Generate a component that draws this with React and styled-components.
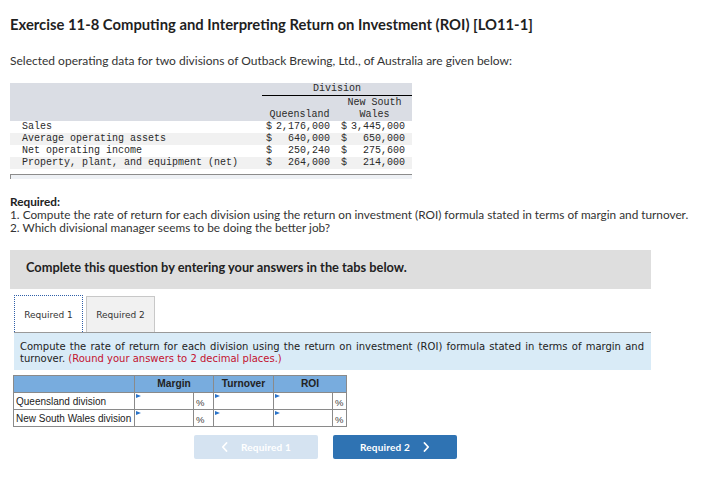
import React from 'react';
import styled, { createGlobalStyle } from 'styled-components';

const Global = createGlobalStyle`
  html, body { margin: 0; padding: 0; background: #fff; }
  body { font-family: Lato, "Open Sans", sans-serif; color: #333; }
`;

const Page = styled.div`
  width: 722px;
  box-sizing: border-box;
  padding: 15px 10px 0;
`;

const Title = styled.h1`
  margin: 0;
  font: 700 14.8px/18px Lato, sans-serif;
  color: #1f1f1f;
`;

const Intro = styled.p`
  margin: 21px 0 0;
  font: 400 12px/14px Lato, sans-serif;
  color: #333;
`;

const DataTable = styled.table`
  margin-top: 15px;
  width: 402px;
  border-collapse: collapse;
  table-layout: fixed;
  font: 400 10px/12px "Liberation Mono", monospace;
  color: #2a2a2a;
  td { padding: 0; height: 12px; white-space: pre; }
`;

const HeadRow = styled.tr`
  background: #dadde4;
  ${p => p.$tall && 'td { height: 13px; }'}
`;

const HeadCell = styled.td`
  text-align: center;
  ${p => p.$rule && 'border-bottom: 1px solid #000;'}
`;

const BodyRow = styled.tr`
  background: ${p => (p.$alt ? '#f1f1f1' : '#fff')};
`;

const LabelCell = styled.td`
  padding-left: 12px !important;
`;

const ValueCell = styled.td`
  padding: 0 7px 0 4px !important;
`;

const Money = styled.span`
  display: flex;
  justify-content: space-between;
`;

const TableFoot = styled.div`
  margin-top: 5px;
  width: 401px;
  height: 4px;
  border-top: 1px solid #8c8c8c;
  border-left: 1px solid #8c8c8c;
  background: #eef1f5;
`;

const Required = styled.div`
  margin-top: 16px;
  font: 400 11.8px/13px Lato, sans-serif;
  color: #333;
  b { font-weight: 700; color: #222; }
`;

const InstructionBar = styled.div`
  margin-top: 16px;
  width: 641px;
  height: 39px;
  box-sizing: border-box;
  padding: 10px 16px 0;
  background: #dedede;
  font: 700 12.8px/14px Lato, sans-serif;
  color: #222;
`;

const TabStrip = styled.div`
  display: flex;
  align-items: flex-end;
  gap: 3px;
  margin: 6px 0 0 4px;
`;

const Tab = styled.div`
  width: 69px;
  box-sizing: border-box;
  height: ${p => (p.$active ? '37px' : '36px')};
  padding-top: 1px;
  display: flex;
  align-items: center;
  justify-content: center;
  font: 400 9px/12px "DejaVu Sans", Verdana, sans-serif;
  color: #333;
  background: ${p => (p.$active ? '#fff' : '#f1f1f1')};
  border: ${p => (p.$active ? '1px dotted #2f5fa8' : '1px solid #c8c8c8')};
  border-bottom: none;
`;

const Panel = styled.div`
  margin-left: 4px;
  width: 637px;
  height: 38px;
  box-sizing: border-box;
  padding: 8px 7px 0 6px;
  background: #d9ebf7;
  border-top: 1px solid #999;
  font: 400 10px/12px "DejaVu Sans", Verdana, sans-serif;
  text-align: justify;
  color: #222;
`;

const Hint = styled.span`
  color: #c4122f;
`;

const AnswerTable = styled.table`
  margin: 5px 0 0 3px;
  border-collapse: collapse;
  table-layout: fixed;
  font: 400 10px/12px "Liberation Sans", Arial, sans-serif;
  color: #222;
  border: 1px solid #777;
  td, th { border: 1px solid #8a8a8a; padding: 0; }
`;

const AHead = styled.tr`
  background: #78acde;
  th { height: 16px; font-weight: 700; font-size: 10.2px; text-align: center; color: #222; }
`;

const ARow = styled.tr`
  td { height: 15px; }
`;

const RowLabel = styled.td`
  padding: 1px 0 0 2px !important;
  white-space: nowrap;
`;

const InputCell = styled.td`
  position: relative;
  background: #fff;
  &::before {
    content: '';
    position: absolute;
    left: 1px;
    top: 1px;
    border-top: 2.5px solid transparent;
    border-bottom: 2.5px solid transparent;
    border-left: 5px solid #2a73c9;
  }
`;

const Pct = styled.td`
  padding-left: 2px !important;
  vertical-align: bottom;
  font-size: 9.5px;
  color: #444;
  line-height: 13px;
`;

const NavRow = styled.div`
  display: flex;
  gap: 15px;
  margin: 8px 0 0 184px;
`;

const NavButton = styled.button`
  width: 124px;
  height: 24px;
  border: none;
  border-radius: 2px;
  display: flex;
  align-items: center;
  justify-content: center;
  gap: 13px;
  font: 700 10px/12px Lato, sans-serif;
  letter-spacing: 0.2px;
  color: #fff;
  background: ${p => (p.$disabled ? '#d5e3f1' : '#2f73b3')};
  cursor: ${p => (p.$disabled ? 'default' : 'pointer')};
  padding: 0;
`;

const Chevron = ({ dir }) => (
  <svg width="7" height="10" viewBox="0 0 7 10" fill="none">
    <path
      d={dir === 'left' ? 'M5.5 1 L1.8 5 L5.5 9' : 'M1.5 1 L5.2 5 L1.5 9'}
      stroke="#fff"
      strokeWidth="1.8"
      strokeLinecap="round"
      strokeLinejoin="round"
    />
  </svg>
);

const rows = [
  { label: 'Sales', q: ['$', '2,176,000'], n: ['$', '3,445,000'] },
  { label: 'Average operating assets', q: ['$', '640,000'], n: ['$', '650,000'] },
  { label: 'Net operating income', q: ['$', '250,240'], n: ['$', '275,600'] },
  { label: 'Property, plant, and equipment (net)', q: ['$', '264,000'], n: ['$', '214,000'] },
];

export default function App() {
  return (
    <>
      <Global />
      <Page>
        <Title>Exercise 11-8 Computing and Interpreting Return on Investment (ROI) [LO11-1]</Title>
        <Intro>Selected operating data for two divisions of Outback Brewing, Ltd., of Australia are given below:</Intro>

        <DataTable>
          <colgroup>
            <col style={{ width: 252 }} />
            <col style={{ width: 75 }} />
            <col style={{ width: 75 }} />
          </colgroup>
          <tbody>
            <HeadRow>
              <td rowSpan={3} />
              <HeadCell colSpan={2} $rule>Division</HeadCell>
            </HeadRow>
            <HeadRow $tall>
              <HeadCell />
              <HeadCell>New South</HeadCell>
            </HeadRow>
            <HeadRow>
              <HeadCell>Queensland</HeadCell>
              <HeadCell>Wales</HeadCell>
            </HeadRow>
            {rows.map((r, i) => (
              <BodyRow key={r.label} $alt={i % 2 === 1}>
                <LabelCell>{r.label}</LabelCell>
                <ValueCell>
                  <Money><span>{r.q[0]}</span><span>{r.q[1]}</span></Money>
                </ValueCell>
                <ValueCell>
                  <Money><span>{r.n[0]}</span><span>{r.n[1]}</span></Money>
                </ValueCell>
              </BodyRow>
            ))}
          </tbody>
        </DataTable>
        <TableFoot />

        <Required>
          <b>Required:</b>
          <br />
          1. Compute the rate of return for each division using the return on investment (ROI) formula stated in terms of margin and turnover.
          <br />
          2. Which divisional manager seems to be doing the better job?
        </Required>

        <InstructionBar>Complete this question by entering your answers in the tabs below.</InstructionBar>

        <TabStrip>
          <Tab $active>Required 1</Tab>
          <Tab>Required 2</Tab>
        </TabStrip>
        <Panel>
          Compute the rate of return for each division using the return on investment (ROI) formula stated in terms of margin and turnover.{' '}
          <Hint>(Round your answers to 2 decimal places.)</Hint>
        </Panel>

        <AnswerTable>
          <colgroup>
            <col style={{ width: 121 }} />
            <col style={{ width: 59 }} />
            <col style={{ width: 20 }} />
            <col style={{ width: 60 }} />
            <col style={{ width: 59 }} />
            <col style={{ width: 14 }} />
          </colgroup>
          <tbody>
            <AHead>
              <th />
              <th colSpan={2}>Margin</th>
              <th>Turnover</th>
              <th colSpan={2}>ROI</th>
            </AHead>
            {['Queensland division', 'New South Wales division'].map(d => (
              <ARow key={d}>
                <RowLabel>{d}</RowLabel>
                <InputCell />
                <Pct>%</Pct>
                <InputCell />
                <InputCell />
                <Pct>%</Pct>
              </ARow>
            ))}
          </tbody>
        </AnswerTable>

        <NavRow>
          <NavButton $disabled>
            <Chevron dir="left" />
            <span>Required 1</span>
          </NavButton>
          <NavButton>
            <span>Required 2</span>
            <Chevron dir="right" />
          </NavButton>
        </NavRow>
      </Page>
    </>
  );
}
